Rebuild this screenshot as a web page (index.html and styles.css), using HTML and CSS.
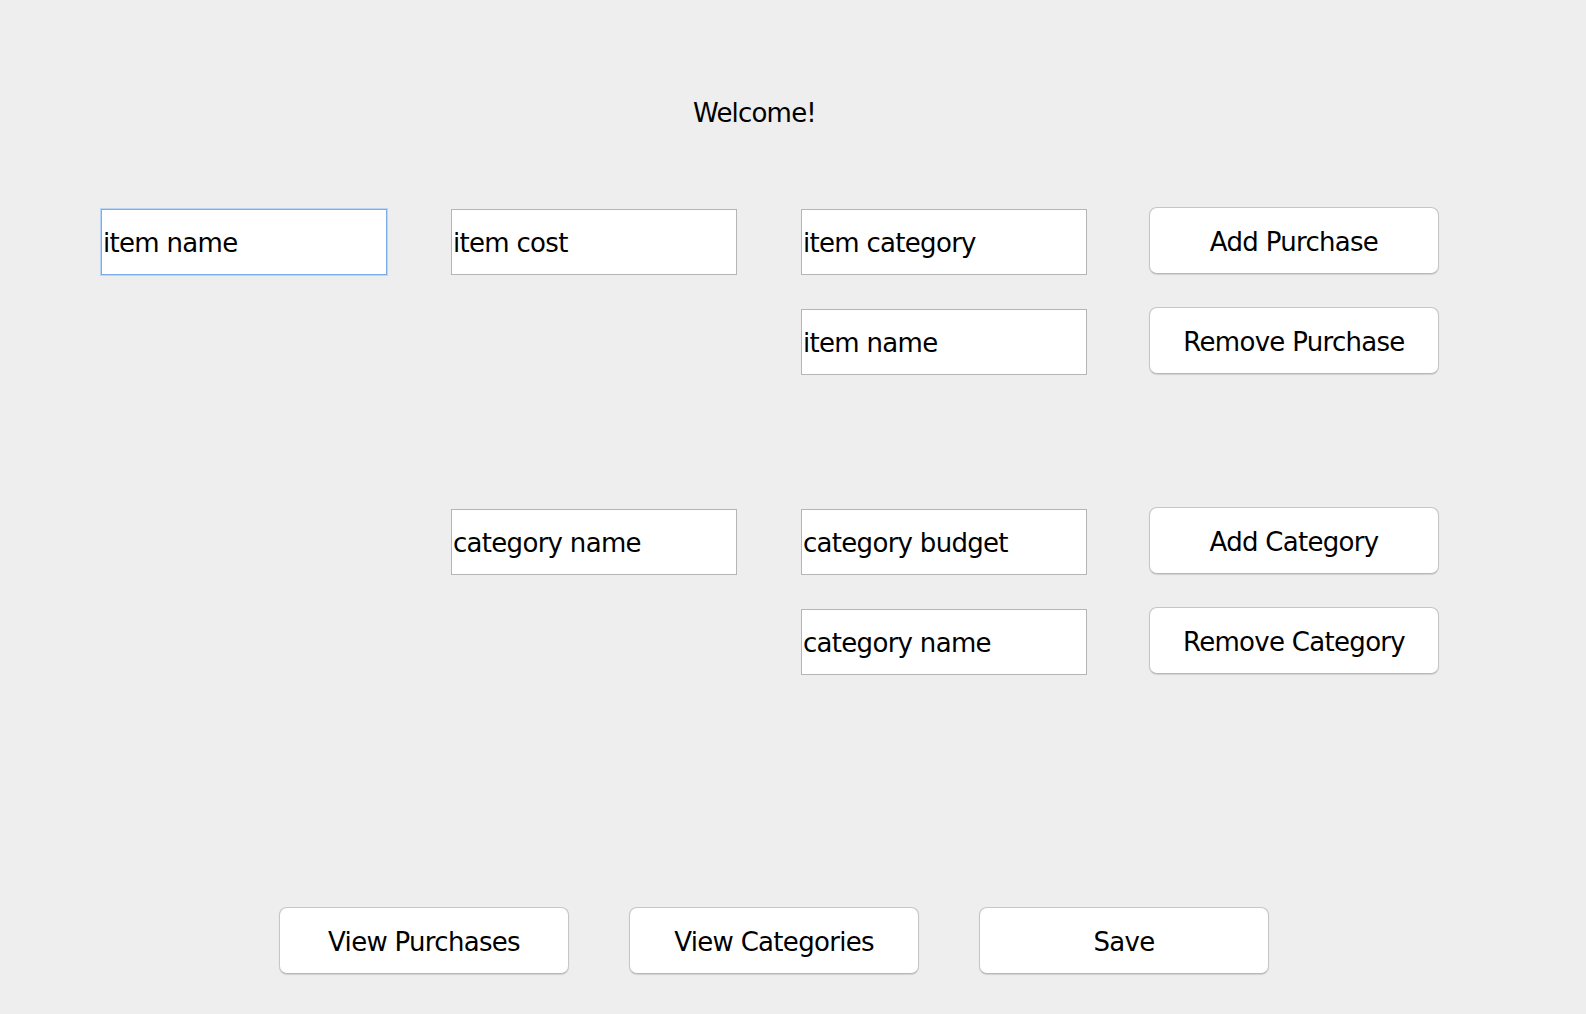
FILE: index.html
```html
<!DOCTYPE html>
<html>
<head>
<meta charset="utf-8">
<link rel="stylesheet" href="styles.css">
</head>
<body>
<div class="app">
  <div class="welcome">Welcome!</div>
  <div class="grid">
    <input class="field focused c1 r1" type="text" value="item name">
    <input class="field c2 r1" type="text" value="item cost">
    <input class="field c3 r1" type="text" value="item category">
    <button class="btn c4 r1">Add Purchase</button>
    <input class="field c3 r2" type="text" value="item name">
    <button class="btn c4 r2">Remove Purchase</button>
    <input class="field c2 r4" type="text" value="category name">
    <input class="field c3 r4" type="text" value="category budget">
    <button class="btn c4 r4">Add Category</button>
    <input class="field c3 r5" type="text" value="category name">
    <button class="btn c4 r5">Remove Category</button>
  </div>
  <div class="bottom">
    <button class="btn">View Purchases</button>
    <button class="btn">View Categories</button>
    <button class="btn">Save</button>
  </div>
</div>
</body>
</html>
```

FILE: styles.css
```css
html, body {
  margin: 0;
  padding: 0;
  background: #eeeeee;
}
body {
  font-family: "DejaVu Sans", "Liberation Sans", sans-serif;
  color: #000;
}
.app {
  padding-top: 98px;
  width: 1586px;
  height: 1014px;
  box-sizing: border-box;
}
.welcome {
  height: 30px;
  line-height: 30px;
  font-size: 26px;
  letter-spacing: -0.8px;
  padding-left: 693px;
}
.grid {
  margin-top: 79px;
  margin-left: 101px;
  display: grid;
  grid-template-columns: repeat(4, 350px);
  grid-template-rows: repeat(5, 100px);
  align-items: start;
}
.c1 { grid-column: 1; }
.c2 { grid-column: 2; }
.c3 { grid-column: 3; }
.c4 { grid-column: 4; margin-left: -2px; }
.r1 { grid-row: 1; }
.r2 { grid-row: 2; }
.r4 { grid-row: 4; }
.r5 { grid-row: 5; }
.field {
  margin-top: 2px;
  width: 286px;
  height: 66px;
  box-sizing: border-box;
  border: 1px solid #b5b5b5;
  background: #fff;
  padding: 2px 0 0 1px;
  font-family: "DejaVu Sans", "Liberation Sans", sans-serif;
  font-size: 26px;
  letter-spacing: -0.7px;
  color: #000;
  outline: none;
  border-radius: 0;
}
.field.focused {
  border-color: #7eaee9;
  box-shadow: 0 0 0 1px #b9d5f5;
}
.btn {
  width: 290px;
  height: 67px;
  box-sizing: border-box;
  background: #fff;
  border: 1px solid #c6c6c6;
  border-bottom-color: #b8b8b8;
  border-radius: 8px;
  box-shadow: 0 1px 1px rgba(0, 0, 0, 0.12);
  font-family: "DejaVu Sans", "Liberation Sans", sans-serif;
  font-size: 26px;
  letter-spacing: -0.7px;
  color: #000;
  padding: 3px 0 0 0;
}
.bottom {
  margin-top: 200px;
  padding-left: 279px;
  display: flex;
  gap: 60px;
}
```
